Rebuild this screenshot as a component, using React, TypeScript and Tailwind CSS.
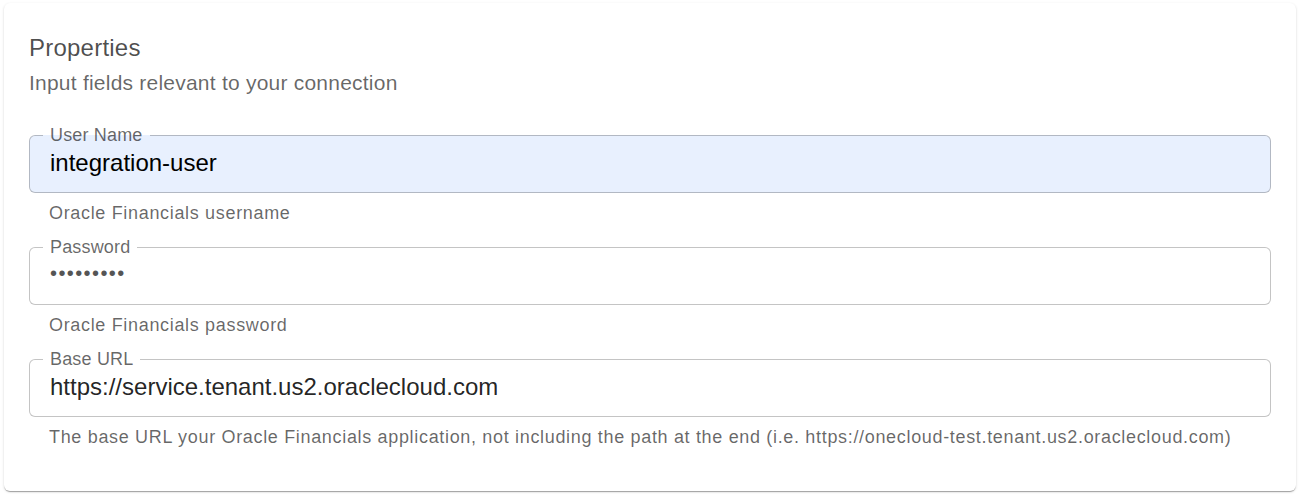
import React from 'react';

type FieldProps = {
  label: string;
  value: string;
  helper: string;
  masked?: boolean;
  autofilled?: boolean;
};

function OutlinedField({ label, value, helper, masked, autofilled }: FieldProps) {
  return (
    <div className="flex flex-col">
      <fieldset
        className={`min-w-0 rounded-[6px] border border-black/[0.23] px-[13px] pb-[15px] ${
          autofilled ? 'bg-[#e8f0fe]' : 'bg-white'
        }`}>
        <legend className="px-[7px] text-[18px] leading-[21px] tracking-[0.17px] text-black/[0.6]">
          {label}
        </legend>
        {masked ? (
          <input
            type="text"
            value={value}
            readOnly
            className="block h-[31px] w-full bg-transparent pl-[7px] pt-[1px] pb-[2px] text-[20px] leading-[28px] tracking-[1.4px] text-[#555] outline-none" />
        ) : (
          <input
            type="text"
            value={value}
            readOnly
            className={`block h-[31px] w-full bg-transparent pl-[7px] pt-[3px] text-[24px] leading-[28px] outline-none ${
              autofilled ? 'text-black' : 'text-black/[0.87]'
            }`} />
        )}
      </fieldset>
      <p className="ml-[20px] mt-[5px] text-[18px] leading-[30px] tracking-[0.67px] text-black/[0.6]">
        {helper}
      </p>
    </div>
  );
}

export default function App() {
  return (
    <div className="min-h-screen bg-white px-[4px] pt-[3px] font-['Liberation_Sans',Arial,sans-serif]">
      <div className="rounded-[6px] bg-white px-[25px] pt-[24px] pb-[39px] shadow-[0_2px_1px_-1px_rgba(0,0,0,0.2),0_1px_1px_0_rgba(0,0,0,0.14),0_1px_3px_0_rgba(0,0,0,0.12)]">
        <h2 className="text-[24px] leading-[42px] tracking-[0.225px] text-black/[0.7]">Properties</h2>
        <p className="text-[21px] leading-[28px] tracking-[0.225px] text-black/[0.6]">
          Input fields relevant to your connection
        </p>
        <div className="mt-[28px] flex flex-col gap-[9px]">
          <OutlinedField
            label="User Name"
            value="integration-user"
            helper="Oracle Financials username"
            autofilled />
          <OutlinedField
            label="Password"
            value="•••••••••"
            helper="Oracle Financials password"
            masked />
          <OutlinedField
            label="Base URL"
            value="https://service.tenant.us2.oraclecloud.com"
            helper="The base URL your Oracle Financials application, not including the path at the end (i.e. https://onecloud-test.tenant.us2.oraclecloud.com)" />
        </div>
      </div>
    </div>
  );
}
